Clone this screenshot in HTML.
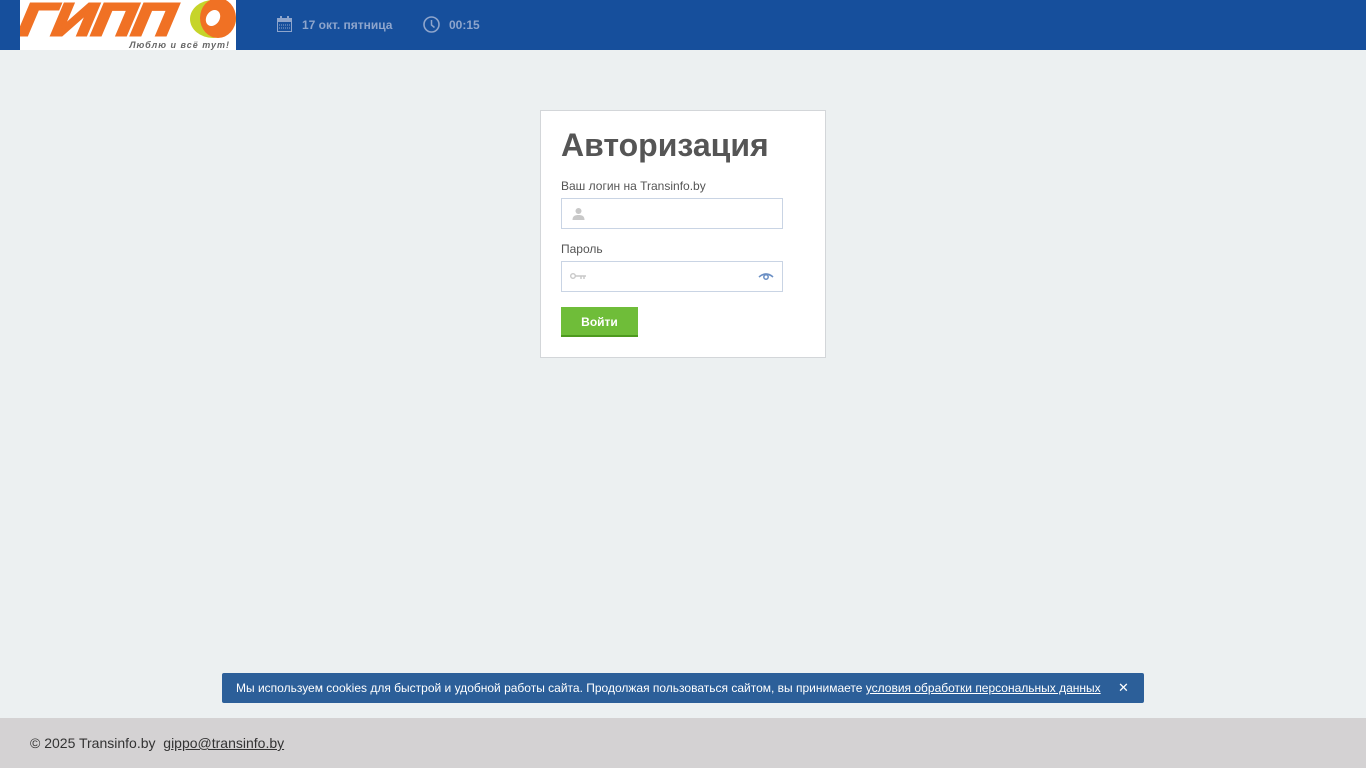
<!DOCTYPE html>
<html><head><meta charset="utf-8"><style>
*{box-sizing:border-box}
body{margin:0;width:1366px;height:768px;background:#ecf0f1;font-family:"Liberation Sans",sans-serif;position:relative;overflow:hidden}
.hdr{position:absolute;left:0;top:0;width:1366px;height:50px;background:#164f9c}
.logo{position:absolute;left:20px;top:0;width:216px;height:50px;background:#fff;overflow:hidden}
.lt{position:absolute;left:4px;top:-3px;font:italic 900 45px/1 "Liberation Sans",sans-serif;color:#f07124;letter-spacing:-1px;transform:skewX(-10deg) scaleX(1.27);transform-origin:left top;-webkit-text-stroke:3px #f07124}
.sub{position:absolute;right:6px;top:40px;font:italic bold 9px "Liberation Sans",sans-serif;color:#666;letter-spacing:1px}
.hi{position:absolute;top:18px;font-size:12px;font-weight:bold;color:#8ea5cc}
.card{position:absolute;left:540px;top:110px;width:286px;height:248px;background:#fff;border:1px solid #d3d6d9}
h1{position:absolute;left:20px;top:16px;margin:0;font-size:32px;font-weight:bold;color:#555}
.lb{position:absolute;left:20px;font-size:12px;color:#555}
.in{position:absolute;left:20px;width:222px;height:31px;border:1px solid #c9d4e4;background:#fff}
.btn{position:absolute;left:20px;top:196px;width:77px;height:30px;background:#6fbd39;border-bottom:2px solid #4d9a1e;color:#fff;font-size:12px;font-weight:bold;text-align:center;line-height:30px}
.ck{position:absolute;left:222px;top:673px;width:922px;height:30px;background:#2c5f99;border-radius:2px;color:#fff;font-size:12px;line-height:30px;padding-left:14px}
.ck u{color:#fff}
.ft{position:absolute;left:0;top:718px;width:1366px;height:50px;background:#d4d2d3;font-size:14px;color:#333;line-height:50px;padding-left:30px}
</style></head><body>
<div class="hdr">
<div class="logo"><div class="lt">ГИПП</div>
<div style="position:absolute;left:170px;top:0;width:46px;height:38px;border-radius:50%;background:#c6d42a"></div>
<div style="position:absolute;left:180px;top:-2px;width:36px;height:40px;border-radius:50%;background:#f07124"></div>
<div style="position:absolute;left:186px;top:10px;width:14px;height:16px;border-radius:50%;background:#fff;transform:skewX(-12deg)"></div>
<div class="sub">Люблю и всё тут!</div></div>
<svg style="position:absolute;left:277px;top:16px" width="15" height="16" viewBox="0 0 15 16"><rect x="0.5" y="2.5" width="14" height="13" fill="none" stroke="#8ea5cc"/><rect x="0" y="2" width="15" height="4" fill="#8ea5cc"/><rect x="3" y="0" width="2" height="4" fill="#8ea5cc"/><rect x="10" y="0" width="2" height="4" fill="#8ea5cc"/><path d="M2 9h11M2 12h11" stroke="#8ea5cc" stroke-dasharray="1 1"/></svg>
<div class="hi" style="left:302px">17 окт. пятница</div>
<svg style="position:absolute;left:423px;top:16px" width="17" height="17" viewBox="0 0 17 17"><circle cx="8.5" cy="8.5" r="7.5" fill="none" stroke="#8ea5cc" stroke-width="1.6"/><path d="M8.5 4v5l3 2.5" fill="none" stroke="#8ea5cc" stroke-width="1.5"/></svg>
<div class="hi" style="left:449px">00:15</div>
</div>
<div class="card">
<h1>Авторизация</h1>
<div class="lb" style="top:68px">Ваш логин на Transinfo.by</div>
<div class="in" style="top:87px"><svg style="position:absolute;left:10px;top:8px" width="13" height="14" viewBox="0 0 13 14"><circle cx="6.5" cy="4" r="3" fill="#c8c8c8"/><path d="M0.5 13c0-4 2.5-5 6-5s6 1 6 5z" fill="#c8c8c8"/></svg></div>
<div class="lb" style="top:131px">Пароль</div>
<div class="in" style="top:150px"><svg style="position:absolute;left:8px;top:10px" width="17" height="8" viewBox="0 0 17 8"><circle cx="3" cy="4" r="2.3" fill="none" stroke="#c8c8c8" stroke-width="1.4"/><path d="M5 4h11M11 4v3M14 4v3" stroke="#c8c8c8" stroke-width="1.4"/></svg>
<svg style="position:absolute;left:196px;top:10px" width="16" height="8" viewBox="0 0 16 8"><path d="M1 5Q8 -1 15 5" fill="none" stroke="#6b8fc4" stroke-width="1.6"/><circle cx="8" cy="5" r="2.2" fill="none" stroke="#6b8fc4" stroke-width="1.5"/></svg></div>
<div class="btn">Войти</div>
</div>
<div class="ck">Мы используем cookies для быстрой и удобной работы сайта. Продолжая пользоваться сайтом, вы принимаете <u>условия обработки персональных данных</u><span style="position:absolute;left:896px;font-size:13px">✕</span></div>
<div class="ft">© 2025 Transinfo.by &nbsp;<u>gippo@transinfo.by</u></div>
</body></html>
